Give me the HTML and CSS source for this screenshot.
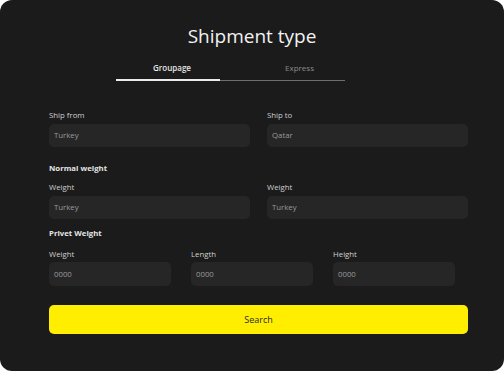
FILE: index.html
```html
<!DOCTYPE html>
<html lang="en">
<head>
  <meta charset="UTF-8">
  <title>Shipment type</title>
  <link rel="stylesheet" href="styles.css">
</head>
<body>
  <div class="card">
    <h1>Shipment type</h1>

    <div class="tabs">
      <div class="tab active">Groupage</div>
      <div class="tab">Express</div>
    </div>

    <div class="row two">
      <div class="field">
        <label>Ship from</label>
        <div class="input">Turkey</div>
      </div>
      <div class="field">
        <label>Ship to</label>
        <div class="input">Qatar</div>
      </div>
    </div>

    <h2>Normal weight</h2>
    <div class="row two">
      <div class="field">
        <label>Weight</label>
        <div class="input">Turkey</div>
      </div>
      <div class="field">
        <label>Weight</label>
        <div class="input">Turkey</div>
      </div>
    </div>

    <h2 class="tight">Privet Weight</h2>
    <div class="row three">
      <div class="field">
        <label>Weight</label>
        <div class="input tall">0000</div>
      </div>
      <div class="field">
        <label>Length</label>
        <div class="input tall">0000</div>
      </div>
      <div class="field">
        <label>Height</label>
        <div class="input tall">0000</div>
      </div>
    </div>

    <button class="search">Search</button>
  </div>
</body>
</html>
```

FILE: styles.css
```css
body {
  margin: 0;
  background: #fff;
  font-family: 'Open Sans', 'Liberation Sans', sans-serif;
}

.card {
  width: 504px;
  height: 371px;
  box-sizing: border-box;
  background: #1b1b1b;
  border-radius: 12px;
  padding: 24px 36px 0 49px;
}

h1 {
  margin: 0 0 0 -13px;
  text-align: center;
  font-size: 19px;
  line-height: 24px;
  font-weight: 400;
  color: #f2f2f2;
}

.tabs {
  display: flex;
  width: 229px;
  margin: 12px 0 0 67px;
  border-bottom: 1px solid #6e6e6e;
}

.tab {
  width: 104px;
  padding: 2px 0 6px;
  font-size: 8px;
  line-height: 11px;
  color: #8c8c8c;
  text-align: center;
}

.tab + .tab {
  width: 125px;
  padding-left: 34px;
  box-sizing: border-box;
}

.tab.active {
  color: #e6e6e6;
  font-weight: 600;
  border-bottom: 2px solid #ececec;
  margin-bottom: -1px;
  padding-left: 8px;
  box-sizing: border-box;
}

.row {
  display: grid;
}

.row.two {
  grid-template-columns: 201px 201px;
  column-gap: 17px;
  margin-top: 29px;
}

.row.three {
  grid-template-columns: 122px 122px 122px;
  column-gap: 20px;
  margin-top: 11px;
}

h2 + .row.two {
  margin-top: 9px;
}

label {
  display: block;
  font-size: 7.8px;
  line-height: 10px;
  color: #cfcfcf;
  margin-bottom: 4px;
}

.row.three label {
  margin-bottom: 3px;
}

.input {
  height: 23px;
  line-height: 23px;
  padding: 0 5px;
  background: #262626;
  border-radius: 5px;
  font-size: 7.8px;
  color: #9a9a9a;
}

.input.tall {
  height: 24px;
  line-height: 24px;
}

h2 {
  margin: 16px 0 0;
  font-size: 7.8px;
  line-height: 10px;
  font-weight: 700;
  color: #e4e4e4;
}

h2.tight {
  margin-top: 9px;
}

.search {
  display: block;
  width: 419px;
  height: 29px;
  margin-top: 19px;
  border: none;
  border-radius: 5px;
  background: #ffee00;
  color: #2a2a2a;
  font-family: inherit;
  font-size: 9px;
}
```
